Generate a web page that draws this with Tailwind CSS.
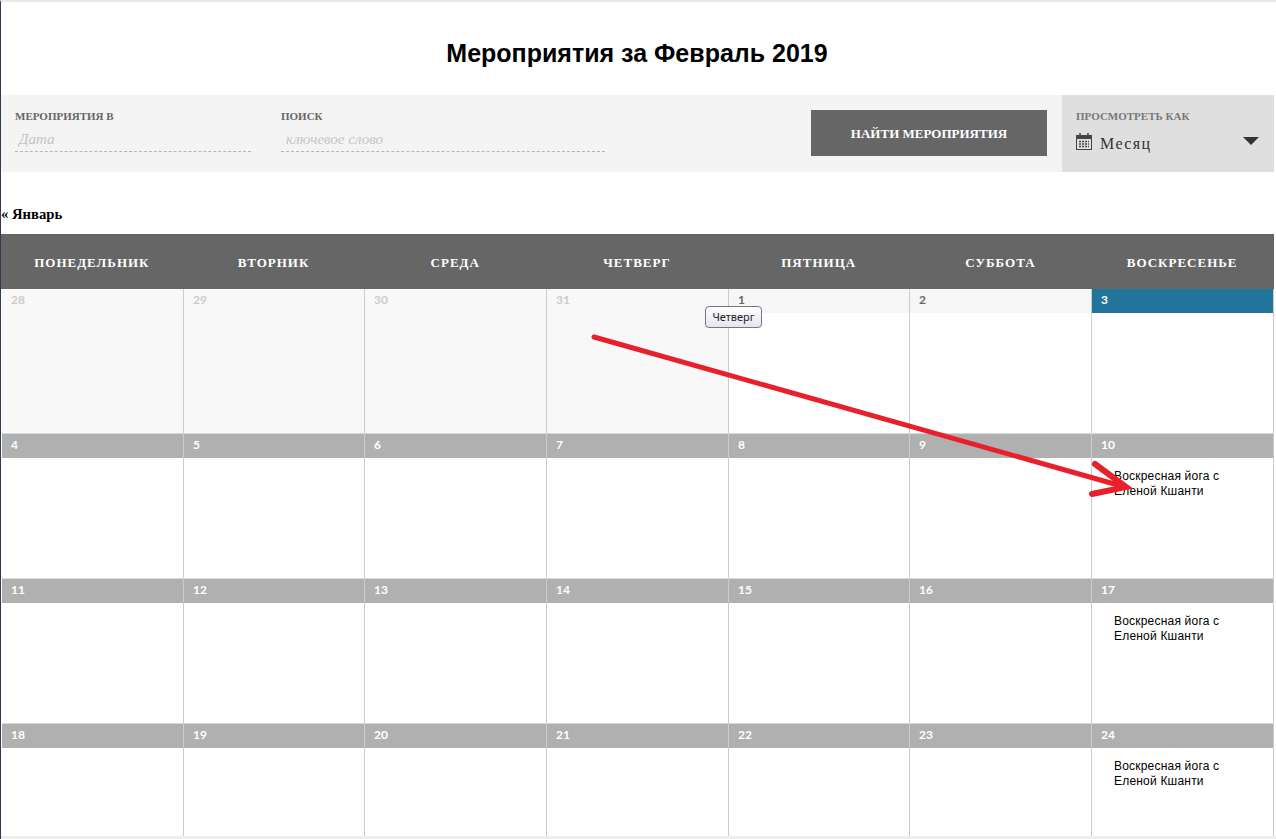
<!DOCTYPE html>
<html lang="ru">
<head>
  <meta charset="UTF-8" />
  <title>Мероприятия за Февраль 2019</title>
  <script src="https://cdn.jsdelivr.net/npm/@tailwindcss/browser@4"></script>
</head>
<body class="bg-white">
  <div class="relative w-[1276px] h-[839px] overflow-hidden border-l border-l-[#2c3e50] border-t-2 border-t-[#e8e8e8] font-['Liberation_Serif',serif]">
    <h1 class="h-[93px] pt-[35px] pr-[3px] text-center font-['Liberation_Sans',sans-serif] text-[25px] leading-[32px] font-bold text-black">Мероприятия за Февраль 2019</h1>

    <!-- filter bar -->
    <div class="flex h-[77px] w-[1273px] bg-[#f4f4f4]">
      <div class="w-[266px] pl-[14px] pt-[14px]">
        <div class="text-[11px] leading-[14px] font-bold text-[#666]">МЕРОПРИЯТИЯ В</div>
        <div class="mt-[2px] w-[236px] h-[27px] border-b border-dashed border-[#b5b5b5] pl-[4px] text-[15px] leading-[28px] italic text-[#c4c4c4]">Дата</div>
      </div>
      <div class="w-[530px] pl-[14px] pt-[14px]">
        <div class="text-[11px] leading-[14px] font-bold text-[#666]">ПОИСК</div>
        <div class="mt-[2px] w-[324px] h-[27px] border-b border-dashed border-[#b5b5b5] pl-[5px] text-[15px] leading-[28px] italic text-[#c4c4c4]">ключевое слово</div>
      </div>
      <div class="pt-[15px] pl-[14px] w-[265px]">
        <button class="w-[236px] h-[46px] pt-[1px] bg-[#666] text-white text-[13px] font-bold">НАЙТИ МЕРОПРИЯТИЯ</button>
      </div>
      <div class="relative flex-1 bg-[#dfdfdf] pl-[14px] pt-[14px]">
        <div class="text-[11px] leading-[14px] font-bold text-[#777]">ПРОСМОТРЕТЬ КАК</div>
        <div class="mt-[11px] flex items-center gap-[8px] text-[#333]">
          <svg class="-mt-[6px]" width="16" height="17" viewBox="0 0 16 17" fill="none" stroke="#444">
            <rect x="0.5" y="2.5" width="15" height="14" />
            <path d="M1 4.5h14" stroke-width="3" />
            <path d="M4 0v3M12 0v3" stroke-width="1.5" />
            <path d="M3 8.5h10M3 11h10M3 13.5h10" stroke-dasharray="2 1" stroke-width="1.5" />
          </svg>
          <span class="text-[16px] leading-[20px] tracking-[1.4px]">Месяц</span>
        </div>
        <div class="absolute right-[15px] top-[42px] w-0 h-0 border-l-[8px] border-r-[8px] border-t-[8px] border-l-transparent border-r-transparent border-t-[#333]"></div>
      </div>
    </div>

    <div class="h-[62px] pt-[34px] text-[14.7px] leading-[16px] font-bold text-black">« Январь</div>

    <!-- calendar -->
    <div class="w-[1273px]">
      <div class="grid grid-cols-7 h-[55px] pr-[1px] bg-[#666] text-white text-[13px] font-bold tracking-[1px] text-center leading-[57px]">
        <div>ПОНЕДЕЛЬНИК</div><div>ВТОРНИК</div><div>СРЕДА</div><div>ЧЕТВЕРГ</div><div>ПЯТНИЦА</div><div>СУББОТА</div><div>ВОСКРЕСЕНЬЕ</div>
      </div>

      <div class="grid grid-cols-[182px_181px_182px_182px_181px_182px_182px] h-[145px] ml-[1px] border-b border-[#d8d8d8] font-['Lato',sans-serif] text-[12px] font-bold">
        <div class="border-r border-[#ccc] bg-[#f8f8f8] h-full"><div class="h-[24px] pl-[9px] leading-[22px] text-[#ccc]">28</div></div>
        <div class="border-r border-[#ccc] bg-[#f8f8f8] h-full"><div class="h-[24px] pl-[9px] leading-[22px] text-[#ccc]">29</div></div>
        <div class="border-r border-[#ccc] bg-[#f8f8f8] h-full"><div class="h-[24px] pl-[9px] leading-[22px] text-[#ccc]">30</div></div>
        <div class="border-r border-[#ccc] bg-[#f8f8f8] h-full"><div class="h-[24px] pl-[9px] leading-[22px] text-[#ccc]">31</div></div>
        <div class="border-r border-[#ccc]"><div class="h-[24px] pl-[9px] leading-[22px] bg-[#f6f6f6] text-[#666]">1</div></div>
        <div class="border-r border-[#ccc]"><div class="h-[24px] pl-[9px] leading-[22px] bg-[#f6f6f6] text-[#666]">2</div></div>
        <div class="border-r border-[#ccc]"><div class="h-[24px] pl-[9px] leading-[22px] bg-[#21759b] text-white">3</div></div>
      </div>

      <div class="grid grid-cols-[182px_181px_182px_182px_181px_182px_182px] h-[145px] ml-[1px] border-b border-[#d8d8d8] font-['Lato',sans-serif] text-[12px] font-bold">
        <div class="border-r border-[#ccc]"><div class="h-[24px] pl-[9px] leading-[22px] bg-[#b0b0b0] text-white">4</div></div>
        <div class="border-r border-[#ccc]"><div class="h-[24px] pl-[9px] leading-[22px] bg-[#b0b0b0] text-white">5</div></div>
        <div class="border-r border-[#ccc]"><div class="h-[24px] pl-[9px] leading-[22px] bg-[#b0b0b0] text-white">6</div></div>
        <div class="border-r border-[#ccc]"><div class="h-[24px] pl-[9px] leading-[22px] bg-[#b0b0b0] text-white">7</div></div>
        <div class="border-r border-[#ccc]"><div class="h-[24px] pl-[9px] leading-[22px] bg-[#b0b0b0] text-white">8</div></div>
        <div class="border-r border-[#ccc]"><div class="h-[24px] pl-[9px] leading-[22px] bg-[#b0b0b0] text-white">9</div></div>
        <div class="border-r border-[#ccc]"><div class="h-[24px] pl-[9px] leading-[22px] bg-[#b0b0b0] text-white">10</div><div class="pl-[22px] pt-[11px] font-['Liberation_Sans',sans-serif] font-normal text-[12px] tracking-[0.2px] leading-[15px] text-black">Воскресная йога с<br>Еленой Кшанти</div></div>
      </div>

      <div class="grid grid-cols-[182px_181px_182px_182px_181px_182px_182px] h-[145px] ml-[1px] border-b border-[#d8d8d8] font-['Lato',sans-serif] text-[12px] font-bold">
        <div class="border-r border-[#ccc]"><div class="h-[24px] pl-[9px] leading-[22px] bg-[#b0b0b0] text-white">11</div></div>
        <div class="border-r border-[#ccc]"><div class="h-[24px] pl-[9px] leading-[22px] bg-[#b0b0b0] text-white">12</div></div>
        <div class="border-r border-[#ccc]"><div class="h-[24px] pl-[9px] leading-[22px] bg-[#b0b0b0] text-white">13</div></div>
        <div class="border-r border-[#ccc]"><div class="h-[24px] pl-[9px] leading-[22px] bg-[#b0b0b0] text-white">14</div></div>
        <div class="border-r border-[#ccc]"><div class="h-[24px] pl-[9px] leading-[22px] bg-[#b0b0b0] text-white">15</div></div>
        <div class="border-r border-[#ccc]"><div class="h-[24px] pl-[9px] leading-[22px] bg-[#b0b0b0] text-white">16</div></div>
        <div class="border-r border-[#ccc]"><div class="h-[24px] pl-[9px] leading-[22px] bg-[#b0b0b0] text-white">17</div><div class="pl-[22px] pt-[11px] font-['Liberation_Sans',sans-serif] font-normal text-[12px] tracking-[0.2px] leading-[15px] text-black">Воскресная йога с<br>Еленой Кшанти</div></div>
      </div>

      <div class="grid grid-cols-[182px_181px_182px_182px_181px_182px_182px] h-[112px] ml-[1px] font-['Lato',sans-serif] text-[12px] font-bold">
        <div class="border-r border-[#ccc]"><div class="h-[24px] pl-[9px] leading-[22px] bg-[#b0b0b0] text-white">18</div></div>
        <div class="border-r border-[#ccc]"><div class="h-[24px] pl-[9px] leading-[22px] bg-[#b0b0b0] text-white">19</div></div>
        <div class="border-r border-[#ccc]"><div class="h-[24px] pl-[9px] leading-[22px] bg-[#b0b0b0] text-white">20</div></div>
        <div class="border-r border-[#ccc]"><div class="h-[24px] pl-[9px] leading-[22px] bg-[#b0b0b0] text-white">21</div></div>
        <div class="border-r border-[#ccc]"><div class="h-[24px] pl-[9px] leading-[22px] bg-[#b0b0b0] text-white">22</div></div>
        <div class="border-r border-[#ccc]"><div class="h-[24px] pl-[9px] leading-[22px] bg-[#b0b0b0] text-white">23</div></div>
        <div class="border-r border-[#ccc]"><div class="h-[24px] pl-[9px] leading-[22px] bg-[#b0b0b0] text-white">24</div><div class="pl-[22px] pt-[11px] font-['Liberation_Sans',sans-serif] font-normal text-[12px] tracking-[0.2px] leading-[15px] text-black">Воскресная йога с<br>Еленой Кшанти</div></div>
      </div>
    </div>
    <div class="h-[3px] bg-[#eee]"></div>

    <!-- tooltip -->
    <div class="absolute left-[704px] top-[304px] w-[57px] h-[22px] rounded-[4px] border border-[#777] bg-gradient-to-b from-white to-[#e4e5f0] text-center font-['Noto_Sans',sans-serif] text-[11px] leading-[20px] text-[#222]">Четверг</div>

    <!-- annotation arrow -->
    <svg class="absolute left-[-1px] top-[-2px]" width="1276" height="839" fill="none" stroke="#e8202c" stroke-linecap="round">
      <path d="M594 337L1125 487" stroke-width="5" />
      <path d="M1095 464L1126 487L1092 494" stroke-width="6" />
    </svg>
  </div>
</body>
</html>
